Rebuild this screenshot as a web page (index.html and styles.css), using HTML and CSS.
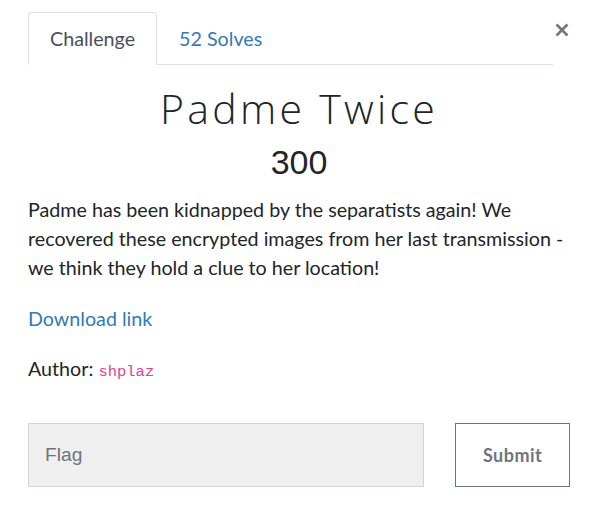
FILE: index.html
```html
<!DOCTYPE html>
<html>
<head>
<meta charset="utf-8">
<link rel="stylesheet" href="styles.css">
</head>
<body>
<div class="modal">
  <div class="header">
    <ul class="tabs">
      <li class="tab active">Challenge</li>
      <li class="tab"><a href="#">52 Solves</a></li>
    </ul>
    <button class="close" aria-label="Close">
      <svg width="14" height="14" viewBox="0 0 14 14"><path d="M1.5 1.5 L12.5 12.5 M12.5 1.5 L1.5 12.5" stroke="#767676" stroke-width="2.6" fill="none"/></svg>
    </button>
  </div>
  <h2 class="title">Padme Twice</h2>
  <h4 class="value">300</h4>
  <p class="desc">Padme has been kidnapped by the separatists again! We recovered these encrypted images from her last transmission - we think they hold a clue to her location!</p>
  <p class="link"><a href="#">Download link</a></p>
  <p class="author">Author: <code>shplaz</code></p>
  <form class="flag-form">
    <input class="flag" type="text" placeholder="Flag">
    <button class="submit" type="button">Submit</button>
  </form>
</div>
</body>
</html>
```
FILE: styles.css
```css
* { box-sizing: border-box; }
body {
  margin: 0;
  background: #fff;
  font-family: Lato, "Open Sans", sans-serif;
  color: #212529;
}
.modal {
  padding: 12px 23px 0 28px;
}
.header {
  display: flex;
  align-items: flex-start;
  margin-right: -1px;
}
.tabs {
  flex: 1;
  display: flex;
  list-style: none;
  margin: 0;
  padding: 0;
  border-bottom: 1px solid #dee2e6;
}
.tab {
  font-size: 19.7px;
  line-height: 29px;
  padding: 11px 21px 11px 21px;
  color: #495057;
  border: 1px solid transparent;
  border-radius: 4px 4px 0 0;
  margin-bottom: -1px;
}
.tab.active {
  border-color: #dee2e6 #dee2e6 #fff;
  background: #fff;
}
.tab a {
  color: #337ab7;
  text-decoration: none;
}
.close {
  border: 0;
  background: none;
  padding: 0;
  margin: 9px 0 0 0;
  width: 18px;
  height: 18px;
  display: flex;
  align-items: center;
  justify-content: center;
}
.title {
  margin: 19px 0 0;
  text-align: center;
  font-family: "Open Sans", sans-serif;
  font-weight: 300;
  font-size: 41px;
  line-height: 48px;
  letter-spacing: 3.3px;
  color: #212529;
}
.value {
  margin: 10px 0 0;
  text-align: center;
  font-family: "Liberation Sans", Arial, sans-serif;
  font-weight: 400;
  font-size: 34px;
  line-height: 40px;
  color: #212529;
}
.desc, .link, .author {
  font-size: 19.7px;
  line-height: 29px;
  margin: 0;
}
.desc {
  margin-top: 13px;
}
.link {
  margin-top: 22px;
}
.link a {
  color: #337ab7;
  text-decoration: none;
}
.author {
  margin-top: 21px;
}
.author code {
  font-family: "Liberation Mono", monospace;
  font-size: 15.5px;
  color: #e83e8c;
}
.flag-form {
  display: flex;
  gap: 31px;
  margin-top: 36px;
}
.flag {
  width: 397px;
  height: 64px;
  background: #efefef;
  border: 1px solid #ced4da;
  font-family: "Liberation Sans", Arial, sans-serif;
  font-size: 19.2px;
  padding: 0 16px;
  color: #495057;
  outline: none;
}
.flag::placeholder {
  color: #6c757d;
}
.submit {
  width: 115px;
  height: 64px;
  background: #fff;
  border: 1px solid #6c757d;
  color: #6c757d;
  font-family: Lato, sans-serif;
  font-weight: 700;
  font-size: 18px;
  letter-spacing: 0.5px;
}
```
